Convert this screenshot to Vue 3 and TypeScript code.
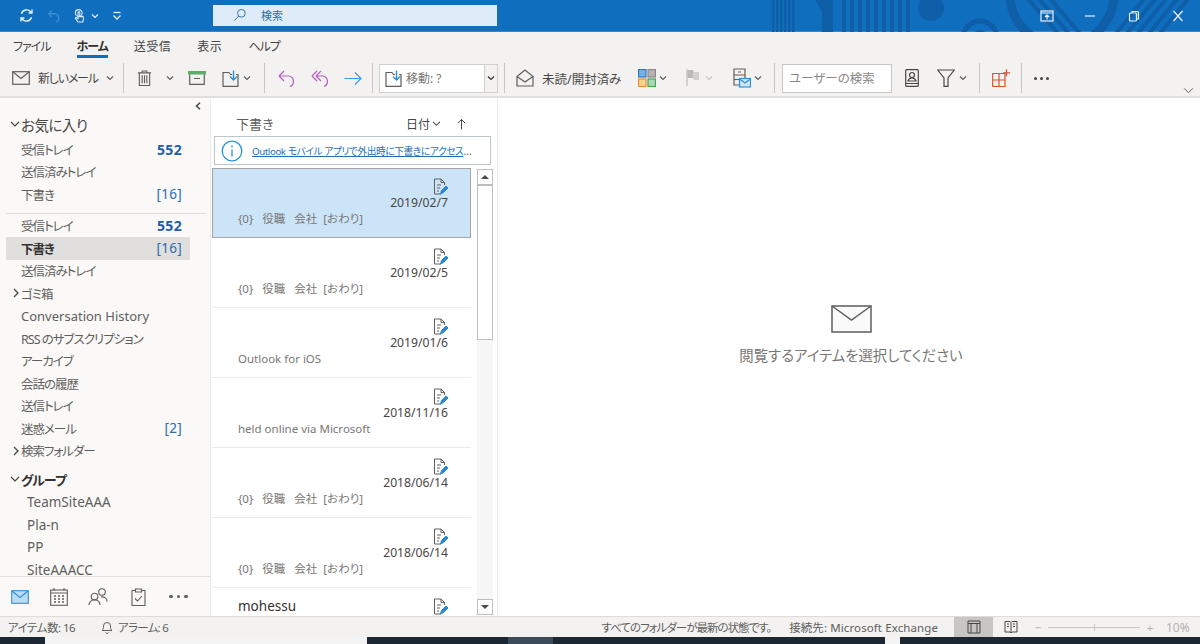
<template>
  <div class="app">
    <!-- Title bar -->
    <header class="titlebar">
      <svg class="title-art" viewBox="0 0 1200 32" aria-hidden="true">
        <g fill="#0f5ea8">
          <rect v-for="x in stripesA" :key="x" :x="x" y="0" width="2.5" height="32" />
          <rect x="822" y="0" width="11" height="32" />
          <path d="M815 0h10v16z" />
          <rect v-for="x in stripesB" :key="x" :x="x" y="0" width="4" height="32" />
          <circle cx="931" cy="8" r="13" />
        </g>
        <g fill="none" stroke="#0f5ea8">
          <circle cx="980" cy="38" r="6" stroke-width="4" />
          <circle cx="980" cy="38" r="17" stroke-width="5" />
          <circle cx="1062" cy="-6" r="52" stroke-width="9" />
          <path d="M1025-5l34 40M1036-5l34 40M1047-5l34 40M1114 36l34-42M1125 36l34-42M1136 36l34-42M1147 36l34-42M1158 36l34-42" stroke-width="4" />
        </g>
      </svg>
      <div class="qat">
        <svg class="qat-icon" viewBox="0 0 20 20">
          <path d="M4 8a6.5 6.5 0 0 1 11-2.5l1.5 1.5M16.5 3v4h-4M16 12a6.5 6.5 0 0 1-11 2.5L3.5 13M3.5 17v-4h4" />
        </svg>
        <svg class="qat-icon qat-icon--off" viewBox="0 0 20 20">
          <path d="M3 8l4-4M3 8l4 4M3 8h8a5 5 0 0 1 1 9.500" />
        </svg>
        <svg class="qat-icon qat-icon--touch" viewBox="0 0 20 20">
          <circle cx="9" cy="6" r="4.500" />
          <path d="M8 5.500a1.200 1.200 0 0 1 2.400 0V11l3-.5c1.500 0 2 1 2 2.500l-1 5H8l-3.500-5 1-1 2.500 1.500z" />
          <path d="M6 13a5 5 0 0 1-1-1" />
        </svg>
        <svg class="chev chev--white chev--touch" viewBox="0 0 8 6"><path d="M1 1.500l3 3 3-3" /></svg>
        <svg class="qat-more" viewBox="0 0 10 10">
          <path d="M1.500 1.500h7" />
          <path d="M1.500 4.500L5 8l3.500-3.500" />
        </svg>
      </div>
      <div class="title-search">
        <svg class="title-search__icon" viewBox="0 0 20 20">
          <circle cx="12" cy="7.500" r="5.500" />
          <path d="M8 11.500L2 18" />
        </svg>
        <span>検索</span>
      </div>
      <div class="win-controls">
        <svg class="win-icon win-icon--display" viewBox="0 0 14 12">
          <rect x="1" y="1" width="12" height="10" />
          <path d="M1 3h12M7 9.500V5M5 7l2-2 2 2" />
        </svg>
        <svg class="win-icon win-icon--min" viewBox="0 0 14 12"><path d="M2 6h10" /></svg>
        <svg class="win-icon win-icon--max" viewBox="0 0 14 12">
          <rect x="2.500" y="3" width="7" height="8" rx="1" />
          <path d="M5 3V1.500h5.500a1 1 0 0 1 1 1V9H9.500" />
        </svg>
        <svg class="win-icon win-icon--close" viewBox="0 0 14 12"><path d="M2.500 1l9 10M11.500 1l-9 10" /></svg>
      </div>
    </header>

    <!-- Tabs -->
    <nav class="tabs">
      <span
        v-for="tab in tabs"
        :key="tab"
        class="tab"
        :class="{ 'tab--active': tab === 'ホーム', 'tab--kana': isKana(tab) }"
      >{{ tab }}</span>
    </nav>

    <!-- Ribbon -->
    <div class="ribbon">
      <div class="rb rb--new">
        <svg class="ic ic--18" viewBox="0 0 18 14"><rect x=".7" y=".7" width="16.600" height="12.600" /><path d="M1 1l8 6.500L17 1" /></svg>
        <span class="rb-label rb-label--new">新しいメール</span>
        <svg class="chev" viewBox="0 0 8 6"><path d="M1 1.500l3 3 3-3" /></svg>
      </div>
      <i class="sep" />
      <div class="rb rb--trash">
        <svg class="ic ic--trash" viewBox="0 0 16 18">
          <path d="M1 3.500h14M5.500 3.500V1.500h5v2M2.500 3.500V17h11V3.500M5.500 6v8.500M8 6v8.500M10.500 6v8.500" />
        </svg>
        <svg class="chev" viewBox="0 0 8 6"><path d="M1 1.500l3 3 3-3" /></svg>
      </div>
      <div class="rb rb--archive">
        <svg class="ic ic--archive" viewBox="0 0 18 14">
          <rect x="0" y="0" width="18" height="3.500" fill="#5cad6a" stroke="none" />
          <path d="M1.700 3.500v9.800h14.600V3.500M6 7.500h6" />
        </svg>
      </div>
      <div class="rb rb--move">
        <svg class="ic ic--move" viewBox="0 0 18 17">
          <path d="M7 2.500H1v13.800h15V4.500h-2M7 2.500l1.500 2H10" />
          <path class="blue" d="M11.500.5v9M8 6.500l3.500 3.500L15 6.500" />
        </svg>
        <svg class="chev" viewBox="0 0 8 6"><path d="M1 1.500l3 3 3-3" /></svg>
      </div>
      <i class="sep sep--gap" />
      <div class="rb rb--reply">
        <svg class="ic ic--arrow purple" viewBox="0 0 18 17">
          <path d="M1 6l5-5M1 6l5 5M1 6h10a5.500 5.500 0 0 1 1 10.500" />
        </svg>
      </div>
      <div class="rb rb--replyall">
        <svg class="ic ic--arrow purple" viewBox="0 0 18 17">
          <path d="M5 6l5-5M5 6l5 5M1 6l5-5M1 6l5 5M5 6h7a5.500 5.500 0 0 1 1 10.500" />
        </svg>
      </div>
      <div class="rb rb--forward">
        <svg class="ic ic--arrow sky" viewBox="0 0 18 14">
          <path d="M.5 7h16.500M11 1l6 6-6 6" />
        </svg>
      </div>
      <i class="sep" />
      <div class="combo">
        <div class="combo__value">
          <svg class="ic ic--move" viewBox="0 0 18 17">
            <path d="M7 2.500H1v13.800h15V4.500h-2M7 2.500l1.500 2H10" />
            <path class="blue" d="M11.500.5v9M8 6.500l3.500 3.500L15 6.500" />
          </svg>
          <span>移動: ?</span>
        </div>
        <div class="combo__drop">
          <svg class="chev chev--dark" viewBox="0 0 8 6"><path d="M1 1.500l3 3 3-3" /></svg>
        </div>
      </div>
      <i class="sep sep--combo" />
      <div class="rb rb--read">
        <svg class="ic ic--open" viewBox="0 0 18 18">
          <path d="M1 7.500L9 1l8 6.500V17H1zM1 7.500l8 5.500 8-5.500" />
        </svg>
        <span class="rb-label">未読/開封済み</span>
      </div>
      <div class="rb rb--cat">
        <svg class="ic ic--cat" viewBox="0 0 18 18">
          <rect x=".5" y=".5" width="7.500" height="7.500" fill="#74b0e6" stroke="#2f79c4" />
          <rect x="10" y=".5" width="7.500" height="7.500" fill="#b5b3b1" stroke="#8a8886" />
          <rect x=".5" y="10" width="7.500" height="7.500" fill="#fbd38a" stroke="#e8912d" />
          <rect x="10" y="10" width="7.500" height="7.500" fill="#a7dcae" stroke="#4aa35b" />
        </svg>
        <svg class="chev" viewBox="0 0 8 6"><path d="M1 1.500l3 3 3-3" /></svg>
      </div>
      <div class="rb rb--flag">
        <svg class="ic ic--flag" viewBox="0 0 14 18">
          <path d="M1 .5V17" stroke="#bdbbb9" />
          <rect x="1.500" y="1" width="6" height="8" fill="#bdbbb9" stroke="none" />
          <rect x="7.500" y="3" width="5.500" height="8" fill="#d2d0ce" stroke="none" />
        </svg>
        <svg class="chev chev--off" viewBox="0 0 8 6"><path d="M1 1.500l3 3 3-3" /></svg>
      </div>
      <div class="rb rb--rules">
        <svg class="ic ic--rules" viewBox="0 0 18 20">
          <path d="M7 17H1V1h11v9M1 7h11M1 11.500h6M5 4h3" />
          <rect x="6.500" y="10.500" width="11" height="8.500" fill="#cfe6f8" stroke="#2f8fdc" />
          <path d="M6.500 11l5.500 4 5.500-4" stroke="#2f8fdc" />
        </svg>
        <svg class="chev" viewBox="0 0 8 6"><path d="M1 1.500l3 3 3-3" /></svg>
      </div>
      <i class="sep" />
      <div class="people-search">ユーザーの検索</div>
      <div class="rb rb--book">
        <svg class="ic ic--book" viewBox="0 0 14 18">
          <rect x=".7" y=".7" width="12.600" height="16.600" rx="1" />
          <circle cx="7" cy="6" r="2.500" />
          <path d="M3 12c.5-2 2-3 4-3s3.500 1 4 3zM1 14.500h12" />
        </svg>
      </div>
      <div class="rb rb--filter">
        <svg class="ic ic--filter" viewBox="0 0 18 18">
          <path d="M.7 1h16.600l-6.300 8v8.300H7V9z" />
        </svg>
        <svg class="chev" viewBox="0 0 8 6"><path d="M1 1.500l3 3 3-3" /></svg>
      </div>
      <i class="sep" />
      <div class="rb rb--addin">
        <svg class="ic ic--addin" viewBox="0 0 18 18">
          <path d="M.7 4.500h12.300v13H.7zM.7 11h12.300M7 4.500v13M14.500.3v7M11 3.800h7" />
        </svg>
      </div>
      <i class="sep" />
      <div class="rb rb--dots"><i /><i /><i /></div>
      <svg class="ribbon-collapse" viewBox="0 0 12 8"><path d="M1 1.500l5 5 5-5" /></svg>
    </div>

    <!-- Main -->
    <main class="main">
      <aside class="folders">
        <div class="folders__scroll">
          <div class="collapse-row">
            <svg class="collapse-row__icon" viewBox="0 0 6 8"><path d="M5 .8L1.500 4 5 7.200" /></svg>
          </div>
          <div class="fav-head">
            <svg class="tw" viewBox="0 0 10 7"><path d="M1 1l4 4 4-4" /></svg>
            <span>お気に入り</span>
          </div>
          <div
            v-for="f in favourites"
            :key="'fav' + f.name"
            class="folder"
          >
            <span class="folder__name folder__name--ja">{{ f.name }}</span>
            <span v-if="f.count" class="folder__count" :class="{ 'folder__count--unread': f.unread }">{{ f.count }}</span>
          </div>
          <div class="folders__rule" />
          <div
            v-for="f in folders"
            :key="f.name"
            class="folder"
            :class="{ 'folder--active': f.active }"
          >
            <svg v-if="f.expandable" class="tw tw--side" viewBox="0 0 7 10"><path d="M1 1l4 4-4 4" /></svg>
            <span class="folder__name" :class="{ 'folder__name--ja': hasJapanese(f.name) }">{{ f.name }}</span>
            <span v-if="f.count" class="folder__count" :class="{ 'folder__count--unread': f.unread }">{{ f.count }}</span>
          </div>
          <div class="group-head">
            <svg class="tw" viewBox="0 0 10 7"><path d="M1 1l4 4 4-4" /></svg>
            <span>グループ</span>
          </div>
          <div v-for="g in groups" :key="g" class="folder folder--group">
            <span class="folder__name">{{ g }}</span>
          </div>
        </div>
        <div class="module-nav">
          <svg class="mod mod--mail" viewBox="0 0 18 14">
            <rect x=".7" y=".7" width="16.600" height="12.600" fill="#bcdcf5" stroke="#2f8fdc" />
            <path d="M1 1l8 6.500L17 1" stroke="#2f8fdc" fill="none" />
          </svg>
          <svg class="mod mod--cal" viewBox="0 0 18 18">
            <rect x=".7" y="2" width="16.600" height="15.300" />
            <path d="M1 5h16M4 0v3M14 0v3" />
            <path class="dots" d="M4 8h2M8 8h2M12 8h2M4 11h2M8 11h2M12 11h2M4 14h2M8 14h2M12 14h2" />
          </svg>
          <svg class="mod mod--people" viewBox="0 0 20 18">
            <circle cx="6.500" cy="8.500" r="3.300" />
            <path d="M1 17c0-3 2.200-5 5.500-5s5.500 2 5.500 5" />
            <circle cx="14" cy="4" r="3.300" />
            <path d="M13 9c3.500-.5 6 1.500 6 4.500" />
          </svg>
          <svg class="mod mod--task" viewBox="0 0 15 18">
            <path d="M4.500 2.500H1v15h13v-15h-3.500M4.500 1h6v3h-6zM4 10.500l2.500 2.500 4.500-5" />
          </svg>
          <div class="mod-dots"><i /><i /><i /></div>
        </div>
      </aside>

      <section class="list">
        <div class="list__head">
          <span class="list__title">下書き</span>
          <span class="list__sort">日付</span>
          <svg class="list__chev" viewBox="0 0 10 7"><path d="M1 1l4 4 4-4" /></svg>
          <svg class="list__arrow" viewBox="0 0 10 12"><path d="M5 12V1M1 5l4-4 4 4" /></svg>
        </div>
        <div class="tip">
          <svg class="tip__icon" viewBox="0 0 22 22">
            <circle cx="11" cy="11" r="9.800" />
            <path d="M11 9.500v7M11 5.500v2" />
          </svg>
          <a class="tip__link">Outlook モバイル アプリで外出時に下書きにアクセス</a><span class="tip__more">…</span>
        </div>
        <div class="list__body">
          <div class="items">
            <article
              v-for="(m, i) in messages"
              :key="i"
              class="item"
              :class="{ 'item--selected': i === 0 }"
            >
              <div class="item__top">
                <span class="item__from">{{ m.from }}</span>
                <svg class="draft" viewBox="0 0 15 17">
                  <path d="M8 16H1.500V1H8l3.500 3.500V7M8 1v3.500h3.500M4 7h4M4 10h3M4 13h2" />
                  <path class="draft__pen" d="M7.500 16l1-3.500L13 8l2 2-4.500 4.500z" />
                </svg>
              </div>
              <div class="item__date">{{ m.date }}</div>
              <div class="item__preview">{{ m.preview }}</div>
            </article>
          </div>
          <div class="scrollbar">
            <div class="scrollbar__btn"><i class="tri tri--up" /></div>
            <div class="scrollbar__thumb" />
            <div class="scrollbar__track" />
            <div class="scrollbar__btn"><i class="tri tri--down" /></div>
          </div>
        </div>
      </section>

      <section class="reading">
        <svg class="reading__icon" viewBox="0 0 41 28">
          <rect x="1" y="1" width="39" height="26" fill="#fafafa" />
          <path d="M1 1l19.500 14L40 1" />
        </svg>
        <p class="reading__text">閲覧するアイテムを選択してください</p>
      </section>
    </main>

    <!-- Status bar -->
    <footer class="status">
      <span class="status__count">アイテム数: 16</span>
      <svg class="status__bell" viewBox="0 0 12 14">
        <path d="M1 10.500c1.500-1 1.500-2.500 1.500-4.500a3.500 3.500 0 0 1 7 0c0 2 0 3.500 1.500 4.500zM4.500 12.500a1.700 1.700 0 0 0 3 0" />
      </svg>
      <span class="status__alarm">アラーム: 6</span>
      <span class="status__sync">すべてのフォルダーが最新の状態です。</span>
      <span class="status__conn">接続先: Microsoft Exchange</span>
      <div class="status__view status__view--on">
        <svg viewBox="0 0 14 14"><path d="M1 1h12v12H1zM1 3.500h12M4 3.500V13M10 3.500V13" /></svg>
      </div>
      <div class="status__view status__view--book">
        <svg viewBox="0 0 14 14"><path d="M1 1.500h5l1 1 1-1h5V12H8l-1 1-1-1H1zM7 2.500V13M3 4h2M3 6.500h2M9 4h2M9 6.500h2" /></svg>
      </div>
      <div class="zoom">
        <span class="zoom__sign">−</span>
        <div class="zoom__track"><i /></div>
        <span class="zoom__sign">+</span>
        <span class="zoom__pct">10%</span>
      </div>
    </footer>

    <!-- Rest of the desktop, cut off at the bottom -->
    <div class="taskbar">
      <i class="tb tb--a" /><i class="tb tb--b" /><i class="tb tb--c" /><i class="tb tb--d" />
      <i class="tb tb--e" /><i class="tb tb--f" />
    </div>
  </div>
</template>

<script setup lang="ts">
interface Folder {
  name: string;
  count?: string;
  unread?: boolean;
  active?: boolean;
  expandable?: boolean;
}

interface Message {
  from: string;
  date: string;
  preview: string;
}

const tabs = ['ファイル', 'ホーム', '送受信', '表示', 'ヘルプ'];

const stripesA = [772, 776, 780, 784, 788, 792];
const stripesB = [842, 850, 858, 866, 874, 882, 890, 898, 906];

const favourites: Folder[] = [
  { name: '受信トレイ', count: '552', unread: true },
  { name: '送信済みトレイ' },
  { name: '下書き', count: '[16]' },
];

const folders: Folder[] = [
  { name: '受信トレイ', count: '552', unread: true },
  { name: '下書き', count: '[16]', active: true },
  { name: '送信済みトレイ' },
  { name: 'ゴミ箱', expandable: true },
  { name: 'Conversation History' },
  { name: 'RSS のサブスクリプション' },
  { name: 'アーカイブ' },
  { name: '会話の履歴' },
  { name: '送信トレイ' },
  { name: '迷惑メール', count: '[2]' },
  { name: '検索フォルダー', expandable: true },
];

const groups = ['TeamSiteAAA', 'Pla-n', 'PP', 'SiteAAACC'];

const template = '{0}   役職   会社  [おわり]';

const messages: Message[] = [
  { from: '', date: '2019/02/7', preview: template },
  { from: '', date: '2019/02/5', preview: template },
  { from: '', date: '2019/01/6', preview: 'Outlook for iOS' },
  { from: '', date: '2018/11/16', preview: 'held online via Microsoft' },
  { from: '', date: '2018/06/14', preview: template },
  { from: '', date: '2018/06/14', preview: template },
  { from: 'mohessu', date: '', preview: '' },
];

// the reference font sets kana tighter than Noto does
function isKana(text: string) {
  return /^[\u30a0-\u30ff]+$/.test(text);
}

function hasJapanese(text: string) {
  return /[\u3040-\u9fff]/.test(text);
}
</script>

<style>
html,
body {
  margin: 0;
  background: #fff;
}
</style>

<style scoped>
.app {
  width: 1200px;
  height: 644px;
  display: flex;
  flex-direction: column;
  overflow: hidden;
  font-family: 'Noto Sans', 'Noto Sans CJK JP', sans-serif;
  font-feature-settings: 'palt';
  font-size: 12px;
  color: #605e5c;
  background: #fff;
}

/* Title bar */
.titlebar {
  position: relative;
  flex: 0 0 32px;
  display: flex;
  align-items: center;
  background: #106ebe;
  border-bottom: 1px solid #2b88d8;
  box-sizing: border-box;
}

.title-art {
  position: absolute;
  left: 0;
  top: 0;
  width: 1200px;
  height: 32px;
}

.qat {
  position: relative;
  width: 213px;
  display: flex;
  align-items: center;
  padding-left: 18px;
  box-sizing: border-box;
}

.qat-icon {
  width: 17px;
  height: 17px;
  fill: none;
  stroke: #e8f1fa;
  stroke-width: 1.600;
}

.qat-icon--off {
  margin-left: 11px;
  stroke: #3f8ed2;
}

.qat-icon--touch {
  margin-left: 9px;
  height: 20px;
  width: 15px;
  stroke-width: 1.400;
}

.qat-more {
  width: 10px;
  height: 10px;
  margin-left: 13px;
  fill: none;
  stroke: #e8f1fa;
  stroke-width: 1.300;
}

.title-search {
  position: relative;
  width: 284px;
  height: 21px;
  margin-top: -1px;
  display: flex;
  align-items: center;
  background: #deecf9;
  color: #2f6f9f;
  font-size: 11px;
}

.title-search__icon {
  width: 14px;
  height: 14px;
  margin-left: 20px;
  margin-right: 14px;
  fill: none;
  stroke: #1b5f96;
  stroke-width: 1.200;
}

.win-controls {
  position: relative;
  margin-left: auto;
  display: flex;
  align-items: center;
}

.win-icon {
  width: 14px;
  height: 12px;
  fill: none;
  stroke: #e8f1fa;
  stroke-width: 1.200;
}

.win-icon--display { margin-right: 29px; }
.win-icon--min { margin-right: 30px; }
.win-icon--max { margin-right: 30px; }
.win-icon--close { margin-right: 15px; }

/* Tabs */
.tabs {
  flex: 0 0 28px;
  display: flex;
  align-items: center;
  box-sizing: border-box;
  padding-top: 1px;
  padding-left: 13px;
  gap: 26px;
  background: #f3f2f1;
  font-size: 12px;
  color: #444;
}

.tab {
  position: relative;
  line-height: 18px;
  letter-spacing: 0.5px;
}

.tab--kana {
  letter-spacing: -1px;
}

.tab--active {
  font-weight: 700;
  color: #323130;
}

.tab--active::after {
  content: '';
  position: absolute;
  left: 0;
  right: 0;
  bottom: -2px;
  height: 3px;
  background: #106ebe;
}

/* Ribbon */
.ribbon {
  position: relative;
  flex: 0 0 38px;
  display: flex;
  align-items: center;
  box-sizing: border-box;
  background: #f3f2f1;
  border-bottom: 2px solid #e1dfdd;
}

.sep {
  flex: 0 0 1px;
  height: 30px;
  background: #c8c6c4;
}

.sep--gap { margin-right: 3px; }
.sep--combo { margin-left: 6px; }

.rb {
  display: flex;
  align-items: center;
  box-sizing: border-box;
  height: 30px;
}

.rb-label {
  font-size: 12.500px;
  color: #484644;
  white-space: nowrap;
}

.rb--new { width: 123px; padding-left: 12px; }
.rb-label--new { margin-left: 8px; width: 60px; font-size: 12px; letter-spacing: -1.200px; }
.rb--trash { width: 56px; padding-left: 13px; }
.rb--trash .chev { margin-left: 14px; }
.rb--archive { width: 34px; justify-content: center; }
.rb--move { width: 50px; padding-left: 8px; }
.rb--move .chev { margin-left: 3px; }
.rb--reply { width: 38px; justify-content: center; }
.rb--replyall { width: 27px; justify-content: center; }
.rb--forward { width: 39px; justify-content: center; }
.rb--read { width: 133px; padding-left: 11px; }
.rb--read .rb-label { margin-left: 8px; }
.rb--cat { width: 48px; }
.rb--cat .chev { margin-left: 3px; }
.rb--flag { width: 47px; }
.rb--flag .chev { margin-left: 5px; }
.rb--rules { width: 41px; }
.rb--rules .chev { margin-left: 3px; }
.rb--book { width: 32px; margin-left: 13px; }
.rb--filter { width: 42px; }
.rb--filter .chev { margin-left: 4px; }
.rb--addin { width: 41px; padding-left: 12px; }

.rb--dots {
  padding-left: 12px;
  gap: 3px;
}

.rb--dots i {
  width: 3px;
  height: 3px;
  border-radius: 50%;
  background: #444;
}

.ic {
  flex: none;
  fill: none;
  stroke: #605e5c;
  stroke-width: 1.200;
}

.ic--18 { width: 18px; height: 14px; }
.ic--trash { width: 15px; height: 18px; }
.ic--archive { width: 18px; height: 14px; }
.ic--move { width: 18px; height: 17px; }
.ic--arrow { width: 18px; height: 17px; }
.ic--open { width: 18px; height: 18px; }
.ic--cat { width: 18px; height: 18px; }
.ic--flag { width: 14px; height: 18px; }
.ic--rules { width: 18px; height: 20px; }
.ic--book { width: 14px; height: 18px; stroke: #484644; }
.ic--filter { width: 18px; height: 18px; stroke: #484644; }
.ic--addin { width: 18px; height: 18px; stroke: #d9532c; }

.ic .blue { stroke: #2f8fdc; stroke-width: 1.400; }
.purple { stroke: #b35fc4; }
.sky { stroke: #3a9be0; }

.chev {
  flex: none;
  width: 8px;
  height: 6px;
  fill: none;
  stroke: #605e5c;
  stroke-width: 1.200;
}

.chev--white { stroke: #e8f1fa; }
.chev--touch { margin-left: 4px; }
.chev--dark { stroke: #323130; }
.chev--off { stroke: #c8c6c4; }

.rb--new .chev { margin-left: 8px; }

.combo {
  flex: 0 0 119px;
  height: 29px;
  margin-left: 6px;
  display: flex;
  box-sizing: border-box;
  border: 1px solid #d2d0ce;
  background: #fff;
}

.combo__value {
  flex: 1;
  display: flex;
  align-items: center;
  gap: 3px;
  padding-left: 5px;
  color: #797775;
  font-size: 12px;
  white-space: nowrap;
}

.combo__drop {
  flex: 0 0 12px;
  display: flex;
  align-items: center;
  justify-content: center;
  background: #f3f2f1;
  border-left: 1px solid #d2d0ce;
}

.people-search {
  flex: 0 0 110px;
  height: 29px;
  margin-left: 7px;
  box-sizing: border-box;
  border: 1px solid #c8c6c4;
  background: #fff;
  padding-left: 6px;
  font-size: 12.500px;
  line-height: 27px;
  color: #8a8886;
}

.ribbon-collapse {
  position: absolute;
  right: 6px;
  bottom: 2px;
  width: 11px;
  height: 7px;
  fill: none;
  stroke: #605e5c;
  stroke-width: 1.100;
}

/* Main */
.main {
  flex: 1;
  min-height: 0;
  display: flex;
}

/* Folder pane */
.folders {
  flex: 0 0 211px;
  display: flex;
  flex-direction: column;
  background: #faf9f8;
  border-right: 1px solid #edebe9;
  box-sizing: border-box;
}

.folders__scroll {
  flex: 1;
  min-height: 0;
}

.collapse-row {
  height: 15px;
  display: flex;
  align-items: center;
  justify-content: flex-end;
  padding-right: 9px;
}

.collapse-row__icon {
  width: 6px;
  height: 8px;
  fill: none;
  stroke: #484644;
  stroke-width: 1.500;
}

.fav-head,
.group-head {
  display: flex;
  align-items: center;
  padding-left: 10px;
  color: #323130;
}

.fav-head {
  height: 22px;
  font-size: 14.500px;
  letter-spacing: -0.500px;
  margin-bottom: 3px;
  color: #484644;
}

.group-head {
  height: 22px;
  margin-top: 6px;
  margin-bottom: 1px;
  font-size: 13px;
  letter-spacing: -1px;
  font-weight: 700;
}

.tw {
  flex: none;
  width: 10px;
  height: 7px;
  margin-right: 1px;
  fill: none;
  stroke: #484644;
  stroke-width: 1.200;
}

.tw--side {
  position: absolute;
  left: 7px;
  top: 6px;
  width: 7px;
  height: 10px;
  margin: 0;
  stroke-width: 1.300;
}

.folder {
  position: relative;
  width: 184px;
  height: 22.500px;
  margin-left: 6px;
  padding: 0 8px 0 15px;
  box-sizing: border-box;
  display: flex;
  align-items: center;
  justify-content: space-between;
  font-size: 13px;
  color: #605e5c;
  white-space: nowrap;
}

.folder__name--ja {
  font-size: 12.500px;
  letter-spacing: -1px;
}

.folder--active {
  background: #e1dfdd;
}

.folder--active .folder__name {
  font-weight: 700;
  color: #323130;
}

.folder--group {
  padding-left: 21px;
  font-size: 13.500px;
}

.folder__count {
  font-size: 13.500px;
  color: #2b6cb0;
  letter-spacing: 0.3px;
}

.folder__count--unread {
  font-size: 14px;
  font-weight: 700;
  color: #1f5ea8;
}

.folders__rule {
  height: 1px;
  margin: 7px 0 1px 6px;
  width: 200px;
  background: #dedcda;
}

.module-nav {
  flex: 0 0 40px;
  position: relative;
  display: flex;
  align-items: center;
  box-sizing: border-box;
  border-top: 1px solid #e1dfdd;
  background: #faf9f8;
  padding-left: 11px;
}

.mod {
  flex: none;
  fill: none;
  stroke: #605e5c;
  stroke-width: 1.100;
}

.mod--mail { width: 18px; height: 14px; }
.mod--cal { width: 18px; height: 18px; margin-left: 21px; }
.mod--people { width: 20px; height: 18px; margin-left: 20px; }
.mod--task { width: 15px; height: 18px; margin-left: 23px; }

.mod--cal .dots {
  stroke-width: 1.600;
}

.mod-dots {
  margin-left: 23px;
  display: flex;
  gap: 4px;
}

.mod-dots i {
  width: 3.500px;
  height: 3.500px;
  border-radius: 50%;
  background: #605e5c;
}

/* Message list */
.list {
  flex: 0 0 287px;
  display: flex;
  flex-direction: column;
  box-sizing: border-box;
  border-right: 1px solid #edebe9;
  background: #fff;
}

.list__head {
  flex: 0 0 38px;
  display: flex;
  align-items: center;
  box-sizing: border-box;
  padding-top: 13px;
  padding-left: 25px;
  font-size: 13px;
  color: #605e5c;
}

.list__title {
  font-size: 13px;
  width: 170px;
}

.list__sort {
  font-size: 12px;
  color: #484644;
  width: 26px;
}

.list__chev {
  width: 9px;
  height: 6px;
  fill: none;
  stroke: #484644;
  stroke-width: 1.200;
}

.list__arrow {
  width: 9px;
  height: 12px;
  margin-left: 16px;
  fill: none;
  stroke: #484644;
  stroke-width: 1.100;
}

.tip {
  flex: 0 0 29px;
  width: 277px;
  margin-left: 3px;
  display: flex;
  align-items: center;
  box-sizing: border-box;
  border: 1px solid #bcc4cc;
  font-size: 9.700px;
  white-space: nowrap;
  color: #605e5c;
}

.tip__icon {
  flex: none;
  width: 22px;
  height: 22px;
  margin: 0 9px 0 6px;
  fill: none;
  stroke: #2b93dd;
  stroke-width: 1.300;
}

.tip__link {
  color: #1e6fb5;
  text-decoration: underline;
  letter-spacing: -0.400px;
}

.tip__more {
  font-size: 10.500px;
}

.list__body {
  flex: 1;
  min-height: 0;
  margin-top: 3px;
  display: flex;
  overflow: hidden;
}

.items {
  flex: 0 0 259px;
  margin-left: 1px;
  overflow: hidden;
}

.item {
  height: 70px;
  box-sizing: border-box;
  padding: 8px 23px 0 26px;
  border-bottom: 1px solid #edebe9;
  font-size: 12px;
  color: #605e5c;
}

.item--selected {
  background: #cce4f7;
  border: 1px solid #a6a6a6;
  padding: 7px 22px 0 25px;
}

.item__top {
  height: 20px;
  display: flex;
  align-items: center;
  justify-content: space-between;
}

.item__from {
  font-size: 13.500px;
  color: #323130;
}

.draft {
  width: 15px;
  height: 17px;
  fill: none;
  stroke: #605e5c;
  stroke-width: 1;
}

.draft__pen {
  fill: #2b88d8;
  stroke: #2b88d8;
}

.item__date {
  height: 16px;
  margin-top: -1px;
  line-height: 16px;
  text-align: right;
  font-size: 12.200px;
  color: #484644;
}

.item__preview {
  height: 16px;
  line-height: 16px;
  font-size: 11.500px;
  white-space: pre-wrap;
  color: #797775;
}

.scrollbar {
  flex: 0 0 16px;
  margin: 1px 0 1px 6px;
  display: flex;
  flex-direction: column;
  background: #f7f7f7;
}

.scrollbar__btn {
  flex: 0 0 16px;
  display: flex;
  align-items: center;
  justify-content: center;
  box-sizing: border-box;
  border: 1px solid #bdbdbd;
  background: #fff;
}

.scrollbar__thumb {
  flex: 0 0 155px;
  box-sizing: border-box;
  border: 1px solid #bdbdbd;
  background: #fff;
}

.scrollbar__track {
  flex: 1;
}

.tri {
  width: 0;
  height: 0;
  border-left: 4px solid transparent;
  border-right: 4px solid transparent;
}

.tri--up { border-bottom: 4px solid #484644; }
.tri--down { border-top: 4px solid #484644; }

/* Reading pane */
.reading {
  flex: 1;
  display: flex;
  flex-direction: column;
  align-items: center;
  padding-top: 207px;
  padding-left: 4px;
  box-sizing: border-box;
  background: #fff;
}

.reading__icon {
  width: 41px;
  height: 28px;
  fill: none;
  stroke: #605e5c;
  stroke-width: 1.500;
}

.reading__text {
  margin: 12px 0 0;
  font-size: 14.400px;
  line-height: 22px;
  color: #797775;
}

/* Status bar */
.status {
  flex: 0 0 21px;
  display: flex;
  align-items: center;
  box-sizing: border-box;
  padding-left: 8px;
  background: #f3f2f1;
  border-top: 1px solid #dedcda;
  font-size: 11.500px;
  color: #605e5c;
  white-space: nowrap;
}

.status__count {
  width: 93px;
  letter-spacing: -0.500px;
}

.status__alarm {
  letter-spacing: -0.700px;
}

.status__bell {
  width: 12px;
  height: 14px;
  margin-right: 5px;
  fill: none;
  stroke: #605e5c;
}

.status__sync {
  margin-left: auto;
  letter-spacing: -1px;
}

.status__conn {
  margin-left: 18px;
  margin-right: 16px;
  letter-spacing: 0.100px;
}

.status__view {
  flex: 0 0 39px;
  height: 20px;
  display: flex;
  align-items: center;
  justify-content: center;
}

.status__view--book {
  flex-basis: 36px;
}

.status__view--on {
  background: #c8c6c4;
}

.status__view svg {
  width: 14px;
  height: 14px;
  fill: none;
  stroke: #484644;
}

.zoom {
  flex: 0 0 171px;
  box-sizing: border-box;
  display: flex;
  align-items: center;
  padding-left: 4px;
  color: #b3b0ad;
}

.zoom__sign {
  width: 10px;
  text-align: center;
}

.zoom__track {
  position: relative;
  width: 92px;
  height: 1px;
  margin: 0 5px;
  background: #c8c6c4;
}

.zoom__track i {
  position: absolute;
  left: 46px;
  top: -3px;
  width: 1px;
  height: 7px;
  background: #c8c6c4;
}

.zoom__pct {
  margin-left: 11px;
  font-size: 12px;
}

/* Desktop sliver */
.taskbar {
  flex: 0 0 7px;
  display: flex;
  background: #1b2733;
}

.tb {
  display: block;
  height: 7px;
}

.tb--a { width: 45px; }
.tb--b { width: 322px; background: #f3f3f3; }
.tb--c { width: 141px; }
.tb--d { width: 45px; background: #3a4a58; }
.tb--e { width: 332px; }
.tb--f { width: 15px; background: #f3f3f3; }
</style>
